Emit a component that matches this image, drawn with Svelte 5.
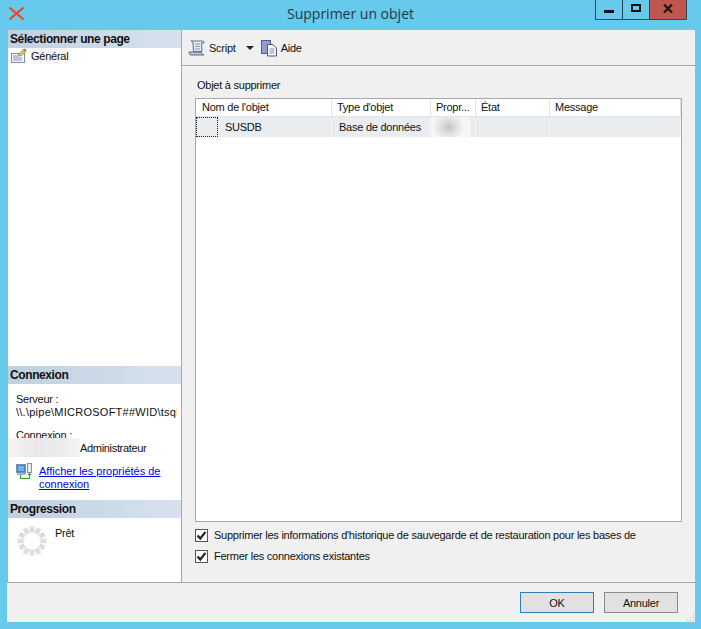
<script>
	const columns = [
		{ label: "Nom de l'objet", width: 136 },
		{ label: "Type d'objet", width: 99 },
		{ label: "Propr...", width: 45 },
		{ label: "État", width: 74 },
		{ label: "Message", width: 131 }
	];
	const options = [
		"Supprimer les informations d'historique de sauvegarde et de restauration pour les bases de",
		"Fermer les connexions existantes"
	];
	const ticks = Array.from({ length: 12 }, (_, i) => i * 30);
</script>

<div class="window">
	<header class="titlebar">
		<svg class="app-icon" width="15" height="13" viewBox="0 0 15 13">
			<path d="M0.500 0.500 L14.500 12.500 M14.500 0.500 L0.500 12.500" stroke="#e8481c" stroke-width="2" fill="none" />
		</svg>
		<h1>Supprimer un objet</h1>
		<div class="controls">
			<div class="ctl"><span class="min"></span></div>
			<div class="ctl"><span class="max"></span></div>
			<div class="ctl close">
				<svg width="10" height="9" viewBox="0 0 10 9">
					<path d="M1 0.500 L9 8.500 M9 0.500 L1 8.500" stroke="#1c1c1c" stroke-width="2.400" fill="none" />
				</svg>
			</div>
		</div>
	</header>

	<div class="client">
		<div class="main">
			<aside class="sidebar">
				<div class="section-head">Sélectionner une page</div>
				<div class="pages">
					<div class="page-item">
						<svg width="16" height="16" viewBox="0 0 16 16">
							<rect x="0.500" y="5.500" width="13" height="9" fill="#f4f6fb" stroke="#7d8db5" />
							<path d="M2 8h6M2 10h9M2 12h9" stroke="#7f93c4" />
							<path d="M7 7 L12 1.500 L15 3.500 L10 8 Z" fill="#e9c04a" stroke="#8a7a2a" stroke-width="0.600" />
							<path d="M12 1 L14 0.500 L15.500 2.500 L14.500 4 Z" fill="#7f8f6f" />
						</svg>
						<span class="page-name">Général</span>
					</div>
				</div>

				<div class="section-head">Connexion</div>
				<div class="connection">
					<div>Serveur :</div>
					<div class="clip">\\.\pipe\MICROSOFT##WID\tsql</div>
					<div class="login">Connexion :</div>
					<div class="user">Administrateur<span class="smudge"></span></div>
					<div class="props">
						<svg width="17" height="17" viewBox="0 0 17 17">
							<rect x="0.500" y="1.500" width="9" height="8" fill="#3f7fe0" stroke="#7f8fa8" />
							<rect x="2" y="3" width="6" height="5" fill="#6fb0f5" />
							<rect x="1" y="10" width="9" height="2" fill="#aab4c4" />
							<rect x="11.500" y="0.500" width="4" height="9" fill="#e8ecf2" stroke="#8a94a4" />
							<path d="M4.500 12 V15.500 H13.500 V11" stroke="#2f9a2a" fill="none" />
							<path d="M11.500 12 L13.500 9.500 L15.500 12 Z" fill="#2f9a2a" />
						</svg>
						<a href="#props">Afficher les propriétés de connexion</a>
					</div>
				</div>

				<div class="section-head">Progression</div>
				<div class="progress">
					<svg width="30" height="30" viewBox="0 0 32 32">
						{#each ticks as angle}
							<rect x="13.500" y="0.500" width="5" height="6.500" fill="#dedede" transform="rotate({angle} 16 16)" />
						{/each}
					</svg>
					<span>Prêt</span>
				</div>
			</aside>

			<section class="content">
				<div class="toolbar">
					<svg width="18" height="18" viewBox="0 0 18 18">
						<path d="M3 2 H14 Q16.500 2 16 4 H13.500 L14 12.500 H5.500 L5 4 Q5 2 3 2 Z" fill="#e6ebf4" stroke="#5c6c90" />
						<path d="M1 13 H13 Q14 16 16 16 H3 Q1 16 1 13 Z" fill="#b9c6dc" stroke="#5c6c90" />
						<path d="M7 5h5M7 7.500h5M7 10h5" stroke="#8a98b8" />
					</svg>
					<span class="tool-label">Script</span>
					<span class="caret"></span>
					<svg width="18" height="18" viewBox="0 0 18 18">
						<rect x="1.500" y="1.500" width="9" height="13" fill="#8f9fd0" stroke="#4e5f96" />
						<path d="M7.500 5.500 H13 L16.500 9 V17 H7.500 Z" fill="#f8f8fb" stroke="#4f566e" />
						<path d="M9.500 10h5M9.500 12h5M9.500 14h5" stroke="#8c93a8" />
					</svg>
					<span class="tool-label">Aide</span>
				</div>

				<div class="panel">
					<div class="panel-title">Objet à supprimer</div>
					<div class="table">
						<div class="thead">
							{#each columns as col}
								<div class="th" style="width: {col.width}px">{col.label}</div>
							{/each}
						</div>
						<div class="row">
							<div class="cell first" style="width: {columns[0].width}px">
								<span class="focus"></span>
								<span>SUSDB</span>
							</div>
							<div class="cell" style="width: {columns[1].width}px">Base de données</div>
							<div class="cell blurred" style="width: {columns[2].width}px"><span></span></div>
							<div class="cell" style="width: {columns[3].width}px"></div>
							<div class="cell" style="width: {columns[4].width}px"></div>
						</div>
					</div>
					<div class="options">
						{#each options as text}
							<div class="option">
								<span class="check">
									<svg width="11" height="11" viewBox="0 0 11 11">
										<path d="M1.500 5.500 L4.300 8.500 L9.500 1.800" stroke="#222" stroke-width="2.200" fill="none" />
									</svg>
								</span>
								<span class="option-text">{text}</span>
							</div>
						{/each}
					</div>
				</div>
			</section>
		</div>

		<footer class="footer">
			<button class="ok">OK</button>
			<button>Annuler</button>
			<svg class="grip" width="10" height="10" viewBox="0 0 10 10">
				<path d="M8 2h1v1H8zM5 5h1v1H5zM8 5h1v1H8zM2 8h1v1H2zM5 8h1v1H5zM8 8h1v1H8z" fill="#b4b4b4" />
			</svg>
		</footer>
	</div>
</div>

<style>
	:global(body) {
		margin: 0;
		background: #67c9eb;
	}

	.window {
		width: 701px;
		height: 629px;
		display: flex;
		flex-direction: column;
		background: #67c9eb;
		font-family: "Liberation Sans", sans-serif;
		font-size: 11px;
		color: #111;
		overflow: hidden;
		letter-spacing: -0.25px;
	}

	.titlebar {
		height: 29px;
		flex: none;
		display: grid;
		grid-template-columns: 1fr auto 1fr;
		align-items: start;
		padding: 0 14px 0 9px;
		box-sizing: border-box;
	}

	.app-icon {
		margin-top: 7px;
	}

	h1 {
		margin: 4px 0 0;
		padding-left: 5px;
		font: 400 14px/20px "Open Sans", sans-serif;
		color: #1d3a48;
		letter-spacing: 0;
		white-space: nowrap;
	}

	.controls {
		justify-self: end;
		display: flex;
		height: 19px;
		border: 1px solid #2c4a58;
		border-top: none;
	}

	.ctl {
		width: 26px;
		display: flex;
		align-items: center;
		justify-content: center;
		border-right: 1px solid #2c4a58;
	}

	.ctl.close {
		width: 36px;
		border-right: none;
		background: #c0564e;
		padding-bottom: 2px;
	}

	.min {
		width: 10px;
		height: 3px;
		background: #111;
		margin-top: 3px;
	}

	.max {
		width: 6px;
		height: 4px;
		border: 2px solid #111;
		margin-bottom: 3px;
	}

	.client {
		flex: 1;
		margin: 0 6px 7px 7px;
		display: flex;
		flex-direction: column;
		background: #f0f0f0;
		border-top: 1px solid #a9b4ba;
		min-height: 0;
	}

	.main {
		flex: 1;
		display: flex;
		min-height: 0;
		border-bottom: 1px solid #a8a8a8;
	}

	.sidebar {
		width: 175px;
		flex: none;
		box-sizing: border-box;
		display: flex;
		flex-direction: column;
		background: #fff;
		border-left: 1px solid #a8b0b4;
		border-right: 1px solid #a8a8a8;
	}

	.section-head {
		height: 18px;
		line-height: 18px;
		padding-left: 2px;
		font-size: 12px;
		font-weight: 700;
		letter-spacing: -0.4px;
		background: linear-gradient(90deg, #c0d0e0, #d6e2ee);
		flex: none;
	}

	.pages {
		flex: 1;
	}

	.page-item {
		display: flex;
		align-items: center;
		gap: 4px;
		padding-left: 3px;
		height: 16px;
	}

	.page-name {
		background: #f6f6f6;
		line-height: 15px;
		padding-top: 1px;
	}

	.connection {
		height: 116px;
		box-sizing: border-box;
		padding: 9px 0 0 8px;
		line-height: 13px;
		flex: none;
		position: relative;
	}

	.clip {
		white-space: nowrap;
		overflow: hidden;
		width: 161px;
		letter-spacing: 0.25px;
	}

	.login {
		margin-top: 10px;
	}

	.user {
		padding-left: 64px;
		letter-spacing: -0.32px;
	}

	.smudge {
		position: absolute;
		left: 0;
		top: 54px;
		width: 72px;
		height: 19px;
		background: linear-gradient(90deg, #f4f4f4, #e8e8e8 40%, #eeeeee 80%, #f4f4f4);
	}

	.props {
		display: flex;
		gap: 6px;
		margin-top: 10px;
		line-height: 13px;
	}

	.props svg {
		flex: none;
		margin-top: -2px;
	}

	.props a {
		color: #0000ee;
		width: 125px;
		letter-spacing: 0;
	}

	.progress {
		height: 64px;
		flex: none;
		display: flex;
		align-items: flex-start;
		padding: 8px 0 0 9px;
		box-sizing: border-box;
		gap: 8px;
	}

	.progress span {
		line-height: 14px;
	}

	.content {
		flex: 1;
		display: flex;
		flex-direction: column;
		min-width: 0;
	}

	.toolbar {
		height: 36px;
		flex: none;
		box-sizing: border-box;
		display: flex;
		align-items: center;
		padding-left: 6px;
		border-bottom: 1px solid #a8a8a8;
		gap: 3px;
	}

	.tool-label {
		line-height: 18px;
	}

	.caret {
		width: 0;
		height: 0;
		border: 4px solid transparent;
		border-top: 4px solid #222;
		border-bottom: none;
		margin: 0 3px 0 7px;
	}

	.panel {
		flex: 1;
		display: flex;
		flex-direction: column;
		padding: 12px 13px 0 13px;
		min-height: 0;
	}

	.panel-title {
		height: 20px;
		line-height: 14px;
		padding-left: 2px;
	}

	.table {
		height: 424px;
		flex: none;
		box-sizing: border-box;
		background: #fff;
		border: 1px solid #a8a8a8;
	}

	.thead {
		display: flex;
		height: 17px;
		border-bottom: 1px solid #e4e4e4;
	}

	.th {
		box-sizing: border-box;
		padding-left: 5px;
		line-height: 17px;
		border-right: 1px solid #e4e4e4;
		background: #fff;
		white-space: nowrap;
	}

	.th:first-child {
		padding-left: 6px;
	}

	.row {
		display: flex;
		height: 20px;
		background: #e9edf0;
	}

	.cell {
		box-sizing: border-box;
		line-height: 20px;
		padding-left: 7px;
		border-right: 1px solid #f0f2f4;
		white-space: nowrap;
	}

	.cell.first {
		display: flex;
		padding-left: 0;
		gap: 7px;
	}

	.focus {
		width: 22px;
		height: 20px;
		box-sizing: border-box;
		border: 1px dotted #222;
	}

	.blurred {
		padding: 0;
		display: flex;
	}

	.blurred span {
		width: 39px;
		height: 20px;
		background: radial-gradient(ellipse 16px 14px at 45% 50%, #c4c4c4, #e2e2e2 55%, #f6f6f6);
	}

	.options {
		padding-top: 3px;
	}

	.option {
		display: flex;
		align-items: center;
		gap: 6px;
		height: 21px;
		white-space: nowrap;
	}

	.option-text {
		margin-top: -2px;
	}

	.check {
		width: 11px;
		height: 11px;
		display: flex;
		background: #fff;
		border: 1px solid #555;
	}

	.footer {
		height: 39px;
		flex: none;
		display: flex;
		justify-content: flex-end;
		align-items: flex-start;
		gap: 10px;
		padding: 9px 17px 0 0;
		box-sizing: border-box;
		position: relative;
	}

	button {
		width: 74px;
		height: 21px;
		padding: 0;
		background: #e1e1e1;
		border: 1px solid #8a8a8a;
		font: inherit;
		color: #111;
		letter-spacing: inherit;
	}

	button.ok {
		border-color: #2f7fb5;
	}

	.grip {
		position: absolute;
		right: 0;
		bottom: 0;
	}
</style>
